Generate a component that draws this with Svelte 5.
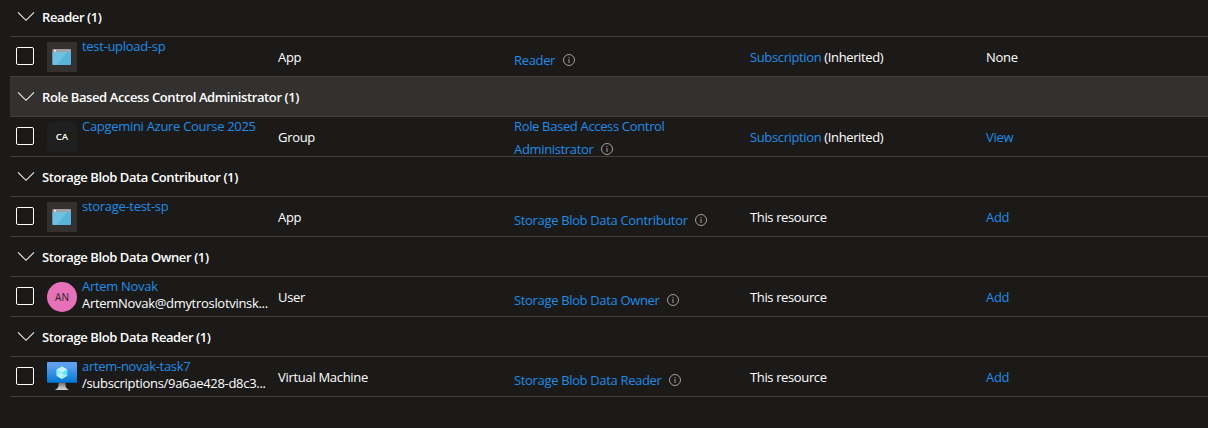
<script lang="ts">
  type Row = {
    group: string; active?: boolean; icon: 'app' | 'ca' | 'an' | 'vm';
    name: string; detail?: string; type: string;
    role: string[]; inherited?: boolean; condition: string;
  };
  const rows: Row[] = [
    { group: 'Reader (1)', icon: 'app', name: 'test-upload-sp', type: 'App', role: ['Reader'], inherited: true, condition: 'None' },
    { group: 'Role Based Access Control Administrator (1)', active: true, icon: 'ca', name: 'Capgemini Azure Course 2025', type: 'Group', role: ['Role Based Access Control', 'Administrator'], inherited: true, condition: 'View' },
    { group: 'Storage Blob Data Contributor (1)', icon: 'app', name: 'storage-test-sp', type: 'App', role: ['Storage Blob Data Contributor'], condition: 'Add' },
    { group: 'Storage Blob Data Owner (1)', icon: 'an', name: 'Artem Novak', detail: 'ArtemNovak@dmytroslotvinsk...', type: 'User', role: ['Storage Blob Data Owner'], condition: 'Add' },
    { group: 'Storage Blob Data Reader (1)', icon: 'vm', name: 'artem-novak-task7', detail: '/subscriptions/9a6ae428-d8c3...', type: 'Virtual Machine', role: ['Storage Blob Data Reader'], condition: 'Add' },
  ];
</script>

<main>
  {#each rows as r}
    <div class="group" class:active={r.active}>
      <svg class="chev" width="18" height="11" viewBox="0 0 18 11"><path d="M1 1.3 9 9.3 17 1.3" fill="none" stroke="#f3f2f1" stroke-width="1.1" /></svg>
      <span>{r.group}</span>
    </div>
    <div class="row">
      <span class="check"></span>
      <div class="avatar {r.icon}">
        {#if r.icon === 'app'}
          <svg width="30" height="30" viewBox="0 0 30 30">
            <path d="M5.500 10h18.500v12.300a.7.7 0 0 1-.7.7H6.200a.7.7 0 0 1-.7-.7z" fill="#59b4d9" />
            <path d="M5.500 10h14.500L10 23H6.200a.7.7 0 0 1-.7-.7z" fill="#72c0df" />
            <path d="M6.200 7h17.100a.7.7 0 0 1 .7.7V10H5.500V7.700a.7.7 0 0 1 .7-.7z" fill="#a0a1a2" />
            <path d="M7 8h2v1.500H7z" fill="#eee" />
          </svg>
        {:else if r.icon === 'vm'}
          <svg width="30" height="30" viewBox="0 0 30 30">
            <defs>
              <linearGradient id="screen" x1="0" y1="1" x2="0" y2="0"><stop offset="0" stop-color="#0078d4" /><stop offset=".82" stop-color="#5ea0ef" /></linearGradient>
              <linearGradient id="stand" x1="0" y1="1" x2="0" y2="0"><stop offset=".15" stop-color="#ccc" /><stop offset="1" stop-color="#707070" /></linearGradient>
            </defs>
            <rect y="0" width="30" height="20.700" rx="1" fill="url(#screen)" />
            <path d="M15 4.400 20.400 7.600v6.200L15 17l-5.400-3.200V7.600z" fill="#50e6ff" />
            <path d="M15 4.400 20.400 7.600 15 10.700 9.600 7.600z" fill="#c3f1ff" />
            <path d="M15 10.700v6.300l-5.400-3.200z" fill="#c3f1ff" />
            <path d="m15 10.700 5.400 3.100L15 17zM9.600 7.600 15 10.700l-5.400 3.100z" fill="#9cebff" />
            <path d="M11.600 20.700h6.800c0 4.500.8 6 3.900 7.300H7.700c3.100-1.300 3.900-2.800 3.900-7.300z" fill="url(#stand)" />
          </svg>
        {:else}{r.icon.toUpperCase()}{/if}
      </div>
      <div class="name"><a>{r.name}</a>{#if r.detail}<span>{r.detail}</span>{/if}</div>
      <div>{r.type}</div>
      <div class="role" class:two={r.role.length > 1}>
        {#each r.role as line, i}
          <div class="line"><a>{line}</a>
            {#if i === r.role.length - 1}
              <svg width="12" height="12" viewBox="0 0 12 12"><circle cx="6" cy="6" r="5.500" fill="none" stroke="#a19f9d" /><path d="M5.500 5h1v4h-1zM5.500 3h1v1h-1z" fill="#a19f9d" /></svg>
            {/if}
          </div>
        {/each}
      </div>
      <div class="scope">{#if r.inherited}<a>Subscription</a> (Inherited){:else}This resource{/if}</div>
      <div>{#if r.condition === 'None'}None{:else}<a>{r.condition}</a>{/if}</div>
    </div>
  {/each}
</main>

<style>
  :global(body) { background: #1b1a19; }
  main { box-sizing: border-box; height: 428px; overflow: hidden; padding-left: 10px; background: #1b1a19; color: #fff;
    font: 13px/18px "Open Sans", "Noto Sans", sans-serif; letter-spacing: -.3px; white-space: nowrap; }
  .group, .row { box-sizing: border-box; height: 40px; border-bottom: 1px solid #41403e; }
  .group { display: flex; align-items: center; gap: 7px; padding-left: 7px; font-weight: 600; letter-spacing: -.4px; }
  .group:first-child { margin-top: -3px; }
  .group span { padding-top: 1px; }
  .chev { margin-top: -1px; }
  .active { background: #323130; }
  .row { display: grid; grid-template-rows: 39px; grid-template-columns: 37px 35px 196px 236px 236px 236px 1fr; align-items: center; }
  .check { box-sizing: border-box; width: 18px; height: 18px; margin: 0 0 2px 6px; border: 1px solid #fff; border-radius: 2px; }
  .avatar { width: 30px; height: 30px; margin-top: 1px; font-size: 10px; line-height: 30px; text-align: center; letter-spacing: 0; }
  .avatar svg { display: block; }
  .app { background: #323130; }
  .ca { background: #1f1f1f; border-radius: 4px; font-size: 9.5px; font-weight: 600; }
  .an { background: #e671b8; border-radius: 50%; color: #252423; }
  .name { align-self: start; display: flex; flex-direction: column; line-height: 17px; padding-top: 1px; }
  a { color: #218ce6; }
  .role { padding-top: 6px; letter-spacing: -.34px; }
  .role.two { padding-top: 2px; }
  .line { display: flex; align-items: center; gap: 7.5px; }
  .two .line { height: 23px; }
  .scope { letter-spacing: -.37px; }
</style>
